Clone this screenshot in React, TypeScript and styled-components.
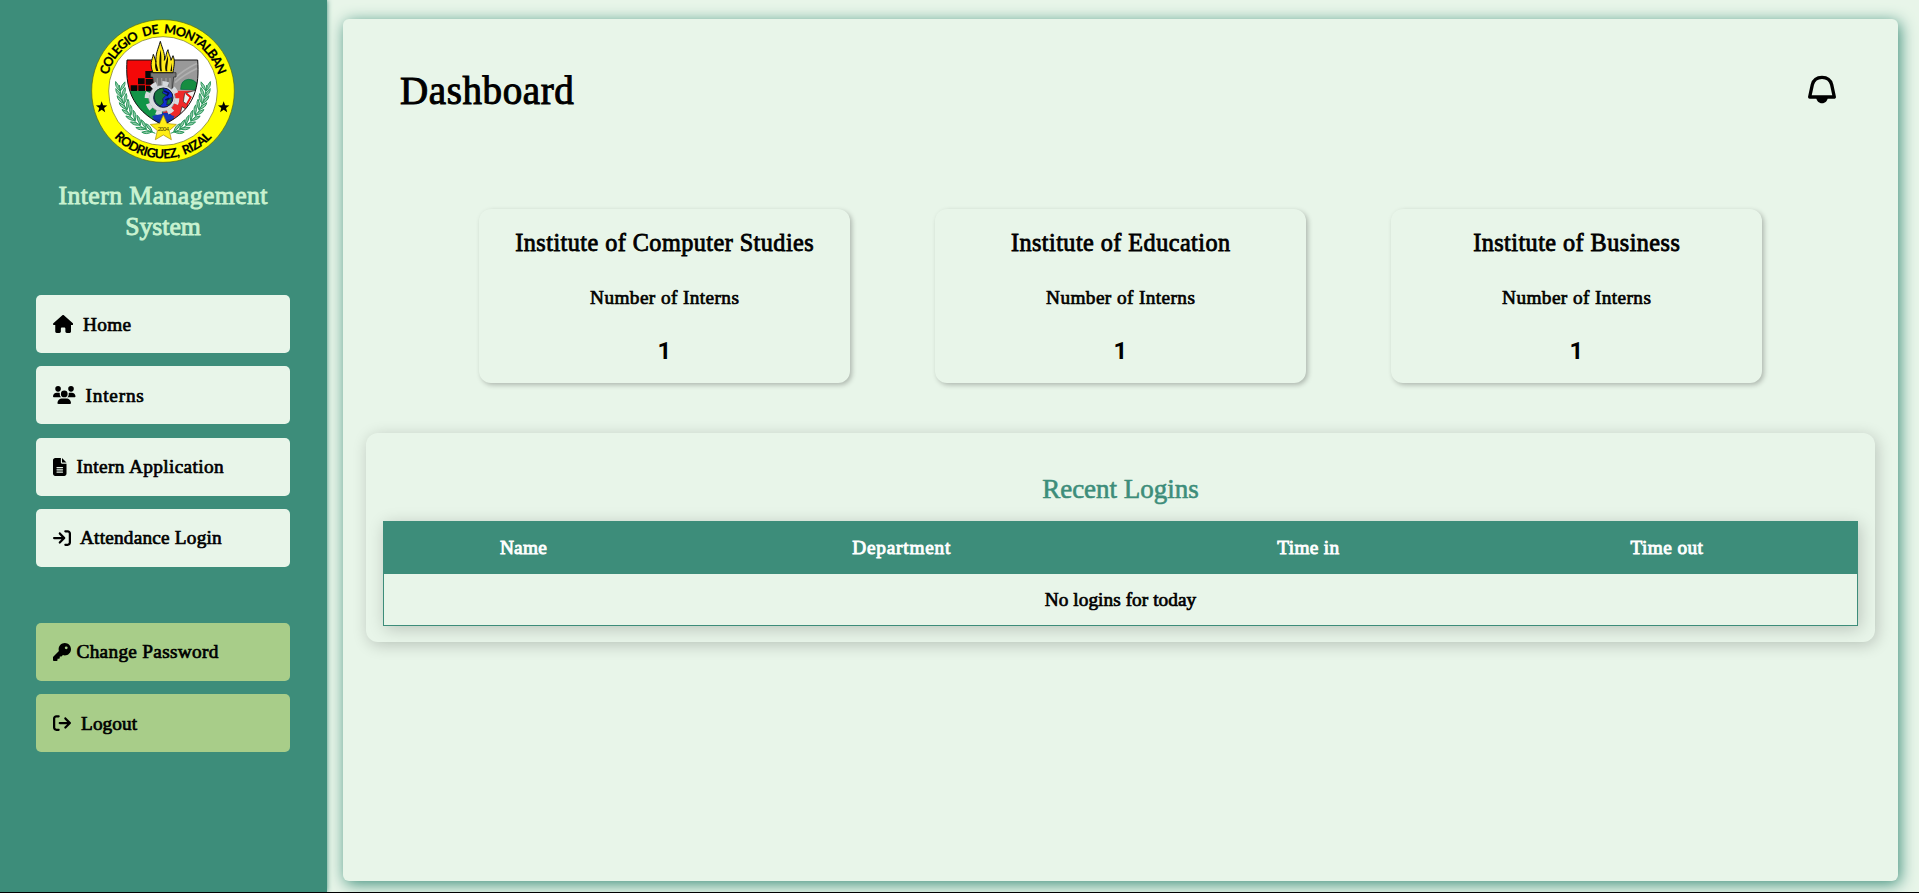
import React from "react";
import styled, { createGlobalStyle } from "styled-components";
import {
  FaHouse,
  FaUsers,
  FaFileLines,
  FaArrowRightToBracket,
  FaArrowRightFromBracket,
  FaKey,
} from "react-icons/fa6";

const green = "#3d8d7a";
const mint = "#e8f5e9";

const GlobalStyle = createGlobalStyle`
  * { box-sizing: border-box; }
  body {
    margin: 0;
    background: ${mint};
    color: #000;
    font-family: "Liberation Serif", "Times New Roman", serif;
    overflow: hidden;
  }
  h1, h2, h3, p { margin: 0; font-weight: 400; }
`;

const Page = styled.div`
  display: flex;
  height: 893px;
  border-bottom: 1px solid #000;
  overflow: hidden;
`;

const Sidebar = styled.aside`
  flex: 0 0 327px;
  display: flex;
  flex-direction: column;
  padding: 10px 37px 0 36px;
  background: ${green};
  box-shadow: 0 0 5px ${green};
`;

const Seal = styled.svg`
  display: block;
  flex: none;
  width: 165px;
  height: 160px;
  margin-left: 44px;
`;

const Label = styled.span<{ $track?: number; $stroke?: number }>`
  letter-spacing: ${(p) => p.$track ?? 0.2}px;
  margin-right: ${(p) => -(p.$track ?? 0.2)}px;
  -webkit-text-stroke: ${(p) => p.$stroke ?? 0.7}px currentColor;
  white-space: nowrap;
`;

const Brand = styled.h2`
  display: flex;
  flex-direction: column;
  align-items: center;
  margin-top: 10px;
  height: 62px;
  font-size: 25.7px;
  line-height: 31px;
  color: #c8f2d0;
`;

const Nav = styled.nav<{ $top: number }>`
  display: flex;
  flex-direction: column;
  gap: 13.3px;
  margin-top: ${(p) => p.$top}px;
`;

const NavButton = styled.a<{ $accent?: boolean; $gap: number }>`
  display: flex;
  align-items: center;
  gap: ${(p) => p.$gap}px;
  height: 58px;
  padding: 0 17px;
  border-radius: 5px;
  background: ${(p) => (p.$accent ? "#a8cd89" : mint)};
  font-size: 19.3px;
  line-height: 24px;

  ${Label} { padding-top: 1px; }
`;

const IconBox = styled.span<{ $width: number }>`
  display: flex;
  flex: none;
  width: ${(p) => p.$width}px;
  height: 18px;

  svg { width: 100%; height: 100%; }
`;

const Main = styled.main`
  flex: none;
  width: 1555px;
  height: 862px;
  margin: 19px 0 0 16px;
  padding: 0 23px;
  border-radius: 6px;
  background: ${mint};
  box-shadow: 2px 3px 16px ${green};
`;

const Header = styled.header`
  display: flex;
  justify-content: space-between;
  align-items: center;
  height: 144px;
  padding: 0 31px 0 34px;
`;

const Title = styled.h1`
  font-size: 39px;
  line-height: 46px;
`;

const Bell = styled.svg`
  width: 44px;
  height: 44px;
  display: block;
  margin-bottom: 3px;
`;

const Cards = styled.section`
  display: flex;
  justify-content: center;
  gap: 85px;
  margin-top: 46px;
`;

const Card = styled.article`
  display: flex;
  flex-direction: column;
  align-items: center;
  width: 371px;
  height: 174px;
  padding-top: 19px;
  border-radius: 12px;
  box-shadow: 2px 2px 5px rgba(0, 0, 0, 0.25);
`;

const CardTitle = styled.h2`
  font-size: 24.2px;
  line-height: 30px;
`;

const CardCaption = styled.h3`
  margin-top: 28px;
  font-size: 19.3px;
  line-height: 24px;
`;

const CardCount = styled.p`
  margin-top: 27px;
  font: bold 24px/28px Roboto, sans-serif;
`;

const Panel = styled.section`
  margin-top: 50px;
  height: 209px;
  padding: 40px 17px 0;
  border-radius: 12px;
  box-shadow: 2px 3px 16px rgba(0, 0, 0, 0.2);
`;

const PanelTitle = styled.h2`
  display: flex;
  justify-content: center;
  height: 32px;
  margin-bottom: 16px;
  font-size: 27px;
  line-height: 32px;
  color: ${green};
`;

const Table = styled.div`
  border: 1px solid ${green};
  box-shadow: 2px 3px 16px rgba(0, 0, 0, 0.2);
`;

const HeadRow = styled.div`
  display: grid;
  grid-template-columns: 279fr 478fr 337fr 381fr;
  align-items: center;
  justify-items: center;
  height: 52px;
  background: ${green};
  color: #fff;
  font-size: 19.3px;
`;

const EmptyRow = styled.div`
  display: flex;
  align-items: center;
  justify-content: center;
  height: 51px;
  font-size: 19.3px;
`;

const starPoints = (cx: number, cy: number, r: number, inner = 0.42) =>
  Array.from({ length: 10 }, (_, i) => {
    const a = -Math.PI / 2 + (i * Math.PI) / 5;
    const d = i % 2 ? r * inner : r;
    return `${(cx + d * Math.cos(a)).toFixed(1)},${(cy + d * Math.sin(a)).toFixed(1)}`;
  }).join(" ");

const leafStems = [
  [120, 240, 92], [124, 259, 84], [131, 278, 76], [140, 296, 68], [151, 313, 60],
  [164, 329, 52], [179, 343, 44], [196, 355, 34], [214, 364, 24],
];

function Branch() {
  return (
    <g>
      <path d="M118 225Q130 340 226 370" fill="none" stroke="#2c9a5e" strokeWidth="3" />
      {leafStems.map(([x, y, a], i) => (
        <g key={i} transform={`translate(${x} ${y}) rotate(${a})`} fill="#8fcaa8" stroke="#1f9153" strokeWidth="2.5">
          <path d="M3 0Q-10 -17 -25 -14Q-16 -3 3 0Z" />
          <path d="M3 0Q-10 17 -25 14Q-16 3 3 0Z" />
        </g>
      ))}
    </g>
  );
}

function CollegeSeal() {
  return (
    <Seal viewBox="0 0 495 480" role="img" aria-label="Colegio de Montalban seal">
      <defs>
        <path id="sealTop" d="M77 243A172 172 0 0 1 421 243" />
        <path id="sealBottom" d="M47 243A202 202 0 0 0 451 243" />
        <clipPath id="shield">
          <path d="M141 150H353C358 225 350 298 249 345C148 298 136 225 141 150Z" />
        </clipPath>
      </defs>
      <circle cx="249" cy="243" r="214" fill="#ff0" stroke="#55670a" strokeWidth="2" />
      <circle cx="249" cy="243" r="163" fill="#fff" stroke="#6b6b10" strokeWidth="2" />
      <g fontFamily="Lato, sans-serif" fontWeight="700" fontSize="38" fill="#000" stroke="#000" strokeWidth="0.6">
        <text textAnchor="middle" wordSpacing="10">
          <textPath href="#sealTop" startOffset="50%" textLength="444">COLEGIO DE MONTALBAN</textPath>
        </text>
        <text textAnchor="middle" wordSpacing="6">
          <textPath href="#sealBottom" startOffset="50%" textLength="328">RODRIGUEZ, RIZAL</textPath>
        </text>
      </g>
      <polygon points={starPoints(65, 292, 18)} />
      <polygon points={starPoints(431, 292, 18)} />
      <Branch />
      <g transform="translate(498 0) scale(-1 1)"><Branch /></g>
      <g clipPath="url(#shield)">
        <path d="M130 140H249V242H130Z" fill="#f50808" />
        <path d="M249 140H365V242H249Z" fill="#999" />
        <path d="M130 242H249V350H130Z" fill="#119447" />
        <path d="M249 242H365V350H249Z" fill="#ef2929" />
        <path d="M285 205Q310 180 352 160M285 218Q310 195 352 175" fill="none" stroke="#b0b0b0" strokeWidth="5" />
        <path d="M302 238Q302 210 325 208Q342 207 353 222L345 240Z" fill="#168d41" stroke="#064" strokeWidth="2" />
        <path d="M196 183H220V204H196ZM174 205H194V223H174ZM197 207H220V224H197ZM152 226H172V243H152ZM175 226H195V243H175ZM198 227H220V244H198Z" fill="#080808" />
        <path d="M314 250L350 240L330 290L310 275ZM306 290L322 300L298 322Z" fill="#eee" stroke="#222" strokeWidth="2" />
        <path d="M318 250L332 262L320 284" fill="none" stroke="#e11" strokeWidth="6" />
        <path d="M205 345L235 308H268L300 345Z" fill="#1432a8" />
      </g>
      <path d="M141 150H353C358 225 350 298 249 345C148 298 136 225 141 150Z" fill="none" stroke="#111" strokeWidth="3" />
      <path d="M212 188H288V201H281L276 245H225L218 201H212Z" fill="#777" stroke="#222" strokeWidth="2" />
      <path d="M232 204V240M245 204V240M258 204V240M270 204V235" stroke="#999" strokeWidth="4" />
      <path d="M219 188C208 162 216 152 220 133C225 145 226 151 228 157C226 131 234 119 241 94C248 119 256 131 253 151C260 139 257 129 264 119C267 137 272 139 273 151L279 137C287 155 281 170 279 188Z" fill="#ffe91a" stroke="#111" strokeWidth="3" />
      <path d="M229 183C222 167 227 158 227 150L235 183ZM241 184C235 157 240 137 241 119C247 140 242 158 246 184ZM257 184C252 164 261 152 263 136C267 156 260 168 262 184ZM271 184L276 158V184Z" fill="#171200" />
      <circle cx="246" cy="265" r="40" fill="#d6dadd" stroke="#777" strokeWidth="2" />
      <circle cx="246" cy="265" r="45" fill="none" stroke="#d6dadd" strokeWidth="14" strokeDasharray="18 17.3" />
      <circle cx="250" cy="263" r="29" fill="#102bd1" stroke="#101830" strokeWidth="3" />
      <path d="M224 249Q236 232 252 237L247 249L259 255L248 266L250 279L240 288Q223 279 223 264ZM262 270L275 262L272 281L260 284Z" fill="#14753d" stroke="#0a2a20" strokeWidth="2" />
      <path d="M252 243L266 249L260 258M256 270L268 265" fill="none" stroke="#080c50" strokeWidth="5" />
      <path d="M216 318L249 311L284 318L276 328H222Z" fill="#1738b8" />
      <polygon points={starPoints(250, 356, 41, 0.46)} fill="#ffed16" stroke="#a58a00" strokeWidth="2" />
      <text x="250" y="364" textAnchor="middle" fontFamily="Liberation Sans, sans-serif" fontSize="18" textLength="34" fill="#4b3c00">2004</text>
    </Seal>
  );
}

const mainLinks = [
  { icon: FaHouse, text: "Home", width: 20.25, gap: 9.75, track: 0.3 },
  { icon: FaUsers, text: "Interns", width: 22.5, gap: 10, track: 0.8 },
  { icon: FaFileLines, text: "Intern Application", width: 13.5, gap: 10, track: 0.37 },
  { icon: FaArrowRightToBracket, text: "Attendance Login", width: 18, gap: 9, track: 0.2 },
];

const accountLinks = [
  { icon: FaKey, text: "Change Password", width: 18, gap: 5.5, track: 0.3 },
  { icon: FaArrowRightFromBracket, text: "Logout", width: 18, gap: 10, track: 0.1 },
];

const institutes = [
  { name: "Institute of Computer Studies", count: 1 },
  { name: "Institute of Education", count: 1 },
  { name: "Institute of Business", count: 1 },
];

export default function App() {
  return (
    <>
      <GlobalStyle />
      <Page>
        <Sidebar>
          <CollegeSeal />
          <Brand>
            <Label $track={0.45} $stroke={0.9}>Intern Management</Label>
            <Label $track={0} $stroke={0.9}>System</Label>
          </Brand>
          <Nav $top={53}>
            {mainLinks.map(({ icon: Icon, text, width, gap, track }) => (
              <NavButton key={text} $gap={gap}>
                <IconBox $width={width}><Icon /></IconBox>
                <Label $track={track}>{text}</Label>
              </NavButton>
            ))}
          </Nav>
          <Nav $top={56}>
            {accountLinks.map(({ icon: Icon, text, width, gap, track }) => (
              <NavButton key={text} $accent $gap={gap}>
                <IconBox $width={width}><Icon /></IconBox>
                <Label $track={track}>{text}</Label>
              </NavButton>
            ))}
          </Nav>
        </Sidebar>
        <Main>
          <Header>
            <Title><Label $track={0.6} $stroke={1}>Dashboard</Label></Title>
            <Bell viewBox="0 0 132 132" aria-label="Notifications">
              <path d="M29 87L37 50C41 34 50 28 66 28S91 34 95 50L103 87Z" fill="none" stroke="#000" strokeWidth="10" strokeLinejoin="round" />
              <path d="M48 88H84C82 99 76 106 66 106S50 99 48 88Z" />
            </Bell>
          </Header>
          <Cards>
            {institutes.map(({ name, count }) => (
              <Card key={name}>
                <CardTitle><Label $track={0.46} $stroke={0.8}>{name}</Label></CardTitle>
                <CardCaption><Label $track={0.4}>Number of Interns</Label></CardCaption>
                <CardCount>{count}</CardCount>
              </Card>
            ))}
          </Cards>
          <Panel>
            <PanelTitle><Label $track={0} $stroke={0.6}>Recent Logins</Label></PanelTitle>
            <Table>
              <HeadRow>
                <Label $track={0.25} $stroke={0.9}>Name</Label>
                <Label $track={0.8} $stroke={0.9}>Department</Label>
                <Label $track={0.35} $stroke={0.9}>Time in</Label>
                <Label $track={0.4} $stroke={0.9}>Time out</Label>
              </HeadRow>
              <EmptyRow><Label $track={0.05}>No logins for today</Label></EmptyRow>
            </Table>
          </Panel>
        </Main>
      </Page>
    </>
  );
}
